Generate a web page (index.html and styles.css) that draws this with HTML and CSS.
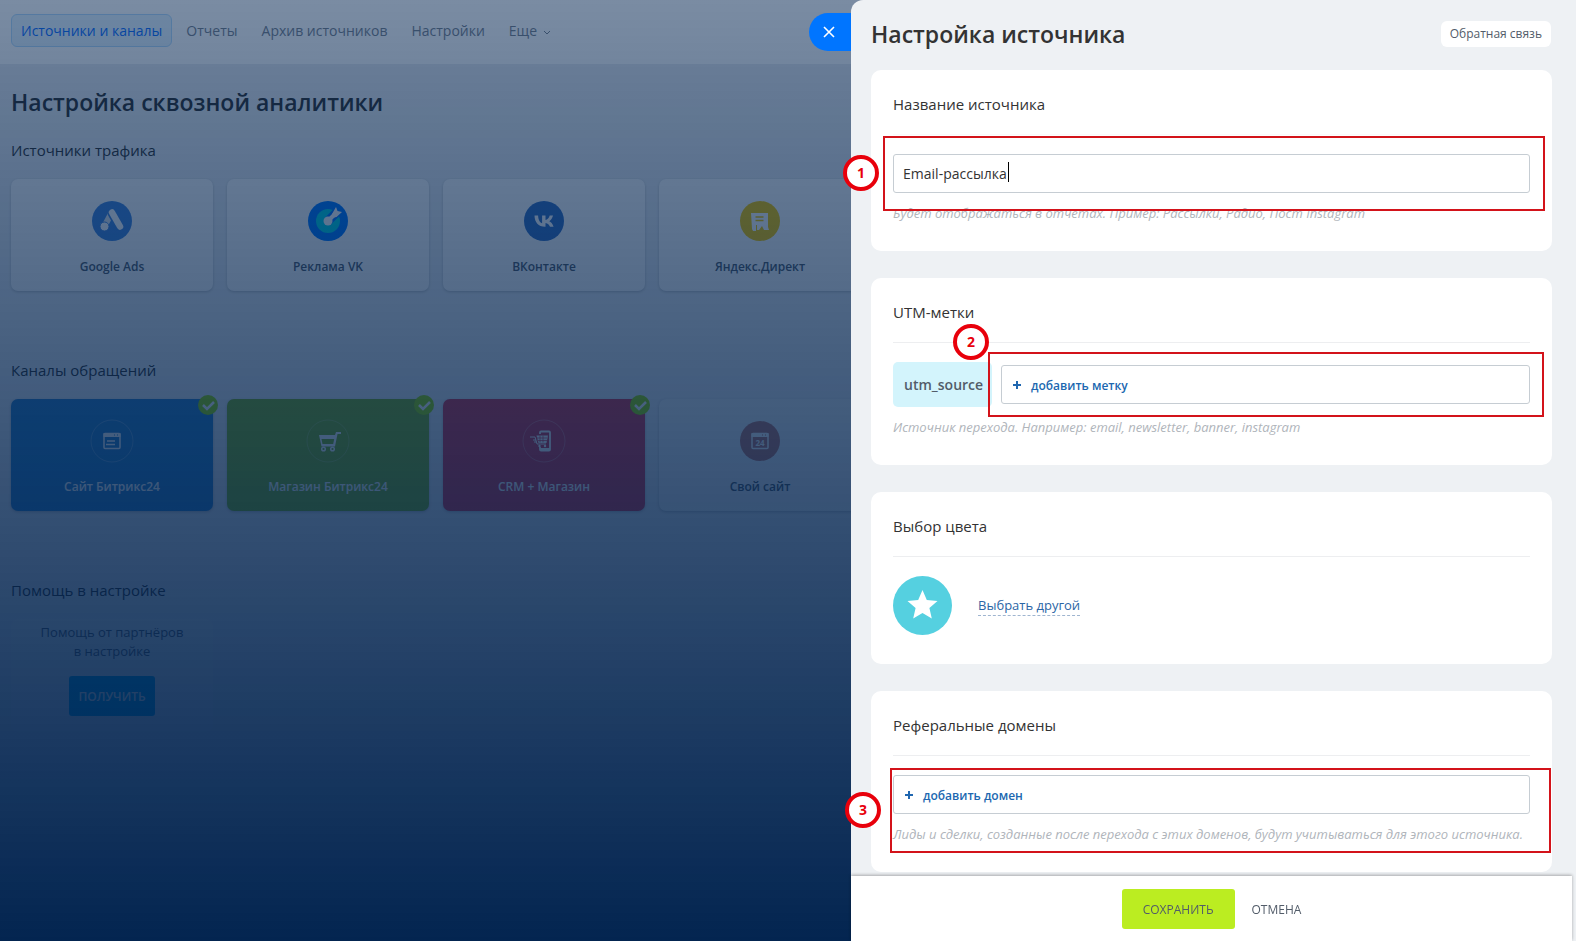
FILE: index.html
```html
<!DOCTYPE html>
<html lang="ru">
<head>
  <meta charset="utf-8">
  <meta name="viewport" content="width=device-width, initial-scale=1">
  <title>Настройка источника</title>
  <link rel="stylesheet" href="styles.css">
</head>
<body>

  <div class="page">
    <nav class="menu">
      <a class="menu-item active" href="#">Источники и каналы</a>
      <a class="menu-item" href="#">Отчеты</a>
      <a class="menu-item" href="#">Архив источников</a>
      <a class="menu-item" href="#">Настройки</a>
      <a class="menu-item" href="#">Еще
        <svg width="8" height="6" viewBox="0 0 8 6"><path d="M1 1l3 3 3-3" fill="none" stroke="currentColor"/></svg>
      </a>
    </nav>

    <main class="content">
      <h1 class="title">Настройка сквозной аналитики</h1>

      <section class="group">
        <h2 class="group-title">Источники трафика</h2>
        <div class="tiles">
          <a class="tile" href="#">
            <svg class="tile-icon" viewBox="0 0 44 44">
              <circle cx="22" cy="22" r="20" fill="#4285dc"/>
              <path d="M21.500 14L14.500 27" stroke="#e3e8ee" stroke-width="6" stroke-linecap="round"/>
              <path d="M22 14l7.500 13.500" stroke="#4285dc" stroke-width="9" stroke-linecap="round"/>
              <path d="M22 13.500l8 14" stroke="#fff" stroke-width="6.500" stroke-linecap="round"/>
              <circle cx="14.500" cy="27.500" r="4.500" fill="#fff" stroke="#4285dc"/>
            </svg>
            <span>Google Ads</span>
          </a>
          <a class="tile" href="#">
            <svg class="tile-icon" viewBox="0 0 44 44">
              <circle cx="22" cy="22" r="20" fill="#0077ff"/>
              <circle cx="22" cy="22" r="12" fill="#00d3e6"/>
              <path d="M22 22l9-9" stroke="#0077ff" stroke-width="9"/>
              <circle cx="22" cy="22" r="4.500" fill="#fff"/>
              <path d="M22 22l8-8" stroke="#fff" stroke-width="4"/>
              <path d="M26 15l4-7 1.500 4 4.500 1-5.500 5-4.500 1z" fill="#fff"/>
            </svg>
            <span>Реклама VK</span>
          </a>
          <a class="tile" href="#">
            <svg class="tile-icon" viewBox="0 0 44 44">
              <circle cx="22" cy="22" r="20" fill="#3570c2"/>
              <path d="M12.500 16.500h3.600c.2 5 2.200 7.300 4 7.700v-7.700h3.400v4.400c2-.2 3.500-2 4.200-4.400h3.300c-.5 2.600-2.300 4.900-3.700 5.700 1.400.6 3.400 2.400 4.300 5.600H28c-.7-2-2.300-3.600-4.500-3.900v3.900C16.500 28 12.700 23.500 12.500 16.500z" fill="#fff"/>
            </svg>
            <span>ВКонтакте</span>
          </a>
          <a class="tile" href="#">
            <svg class="tile-icon" viewBox="0 0 44 44">
              <circle cx="22" cy="22" r="20" fill="#f5c800"/>
              <path d="M13 14h17v14l1 3h-5l-2-4-3 4h-2v-5h-1v6h-3l-1-2z" fill="#fff"/>
              <path d="M17.500 18h8M17.500 21.500h8" stroke="#f5c800" stroke-width="1.500"/>
            </svg>
            <span>Яндекс.Директ</span>
          </a>
        </div>
      </section>

      <section class="group">
        <h2 class="group-title">Каналы обращений</h2>
        <div class="tiles">
          <a class="tile tile-blue" href="#">
            <svg class="tile-icon" viewBox="0 0 44 44">
              <circle cx="22" cy="22" r="21" fill="none" stroke="#fff" stroke-opacity=".25"/>
              <rect x="14" y="14.500" width="16" height="15" rx="1" fill="none" stroke="#fff" stroke-width="1.500"/>
              <path d="M13.500 14h17v4h-17z" fill="#fff"/>
              <path d="M17 22h8M16 25.500h9" stroke="#fff" stroke-width="1.500"/>
              <path d="M24 16h1M27 16h1" stroke="#2a82c8"/>
            </svg>
            <span>Сайт Битрикс24</span>
            <svg class="tile-check" viewBox="0 0 20 20"><circle cx="10" cy="10" r="10" fill="#9bdc00"/><path d="M5 10l4 4 7-7" fill="none" stroke="#fff" stroke-width="2.500"/></svg>
          </a>
          <a class="tile tile-green" href="#">
            <svg class="tile-icon" viewBox="0 0 44 44">
              <circle cx="22" cy="22" r="21" fill="none" stroke="#fff" stroke-opacity=".2"/>
              <path d="M13 16h16l1-3h5v2h-3.500L29 27.500H15.500zM15.500 20l1 5h10.700l1-5z" fill="#fff" fill-rule="evenodd"/>
              <circle cx="17.500" cy="30" r="1.800" fill="none" stroke="#fff" stroke-width="1.500"/>
              <circle cx="26.500" cy="30" r="1.800" fill="none" stroke="#fff" stroke-width="1.500"/>
            </svg>
            <span>Магазин Битрикс24</span>
            <svg class="tile-check" viewBox="0 0 20 20"><circle cx="10" cy="10" r="10" fill="#9bdc00"/><path d="M5 10l4 4 7-7" fill="none" stroke="#fff" stroke-width="2.500"/></svg>
          </a>
          <a class="tile tile-red" href="#">
            <svg class="tile-icon" viewBox="0 0 44 44">
              <circle cx="22" cy="22" r="21" fill="none" stroke="#fff" stroke-opacity=".25"/>
              <path d="M18 15v-1.500q0-1 1-1h8q1 0 1 1v17q0 1-1 1h-8q-1 0-1-1V28" fill="none" stroke="#fff" stroke-width="1.800"/>
              <path d="M18 29h10v3H18z" fill="#fff"/>
              <path d="M8 18h5l2 7h9M11 21h3M12 23h3" fill="none" stroke="#fff"/>
              <path d="M14.500 16.500H26L24.500 24h-8z" fill="#fff"/>
              <path d="M15 19h10M16 21.500h9M18 16.500v7M21 16.500v7" stroke="#d6374e" stroke-width=".7"/>
              <circle cx="17.500" cy="27" r="1.200" fill="#fff"/><circle cx="23" cy="27" r="1.200" fill="#fff"/>
            </svg>
            <span>CRM + Магазин</span>
            <svg class="tile-check" viewBox="0 0 20 20"><circle cx="10" cy="10" r="10" fill="#9bdc00"/><path d="M5 10l4 4 7-7" fill="none" stroke="#fff" stroke-width="2.500"/></svg>
          </a>
          <a class="tile tile-pale" href="#">
            <svg class="tile-icon" viewBox="0 0 44 44">
              <circle cx="22" cy="22" r="20" fill="#c07a70"/>
              <rect x="14" y="14.500" width="16" height="15" rx="1" fill="none" stroke="#fff" stroke-width="1.500"/>
              <path d="M13.500 14h17v4h-17z" fill="#fff"/>
              <path d="M24 16h1M27 16h1" stroke="#c07a70"/>
              <text class="icon-text" x="22" y="27" text-anchor="middle">24</text>
            </svg>
            <span>Свой сайт</span>
          </a>
        </div>
      </section>

      <section class="group">
        <h2 class="group-title">Помощь в настройке</h2>
        <div class="tiles">
          <div class="help">
            <p class="help-text">Помощь от партнёров<br>в настройке</p>
            <button class="help-btn" type="button">ПОЛУЧИТЬ</button>
          </div>
        </div>
      </section>
    </main>
  </div>

  <div class="overlay"></div>

  <form class="panel">
    <button class="close" type="button" aria-label="Закрыть">
      <svg width="12" height="12" viewBox="0 0 12 12"><path d="M1 1l10 10M11 1L1 11" stroke="#fff" stroke-width="1.600"/></svg>
    </button>

    <div class="panel-body">
      <header class="panel-head">
        <h1 class="panel-title">Настройка источника</h1>
        <button class="feedback" type="button">Обратная связь</button>
      </header>

      <section class="card card-name">
        <h2 class="card-title"><label for="name">Название источника</label></h2>
        <div class="field">
          <input class="input" id="name" type="text" value="Email-рассылка">
          <span class="caret"></span>
          <div class="mark mark-name"></div>
          <div class="step step-name">1</div>
        </div>
        <p class="hint">Будет отображаться в отчетах. Пример: Рассылки, Радио, Пост Instagram</p>
      </section>

      <section class="card">
        <h2 class="card-title">UTM-метки</h2>
        <div class="utm">
          <span class="utm-label">utm_source</span>
          <div class="field">
            <button class="input add" type="button">
              <svg width="8" height="8" viewBox="0 0 8 8"><path d="M4 0v8M0 4h8" stroke="currentColor" stroke-width="2"/></svg>
              добавить метку
            </button>
            <div class="mark mark-utm"></div>
            <div class="step step-utm">2</div>
          </div>
        </div>
        <p class="hint">Источник перехода. Например: email, newsletter, banner, instagram</p>
      </section>

      <section class="card">
        <h2 class="card-title">Выбор цвета</h2>
        <div class="color">
          <svg width="59" height="59" viewBox="0 0 59 59">
            <circle cx="29.500" cy="29.500" r="29.500" fill="#55d0e0"/>
            <path d="M29.500 14l4.300 9.900 10.700 1-8.100 7.100 2.400 10.500-9.300-5.500-9.300 5.500L22.600 32l-8.100-7.100 10.700-1z" fill="#fff"/>
          </svg>
          <a class="color-link" href="#">Выбрать другой</a>
        </div>
      </section>

      <section class="card">
        <h2 class="card-title">Реферальные домены</h2>
        <div class="field">
          <button class="input add" type="button">
            <svg width="8" height="8" viewBox="0 0 8 8"><path d="M4 0v8M0 4h8" stroke="currentColor" stroke-width="2"/></svg>
            добавить домен
          </button>
          <p class="hint">Лиды и сделки, созданные после перехода с этих доменов, будут учитываться для этого источника.</p>
          <div class="mark mark-domain"></div>
          <div class="step step-domain">3</div>
        </div>
      </section>
    </div>

    <footer class="panel-foot">
      <button class="save" type="submit">СОХРАНИТЬ</button>
      <button class="cancel" type="button">ОТМЕНА</button>
    </footer>
  </form>

</body>
</html>
```
FILE: styles.css
```css
* {
  box-sizing: border-box;
}

body {
  margin: 0;
  height: 100vh;
  overflow: hidden;
  background: #e8ebef;
  color: #333;
  font-family: "Open Sans", "Noto Sans", sans-serif;
  font-size: 14px;
}

h1, h2, p {
  margin: 0;
}

a {
  color: inherit;
  text-decoration: none;
}

button, input {
  font-family: inherit;
  margin: 0;
}

button {
  cursor: pointer;
}

/* page under the slider */

.menu {
  display: flex;
  align-items: flex-start;
  gap: 4px;
  height: 64px;
  padding: 14px 11px;
  background: #fff;
}

.menu-item {
  padding: 0 9px;
  border: 1px solid transparent;
  border-radius: 6px;
  line-height: 31px;
  color: #7b8490;
}

.menu-item.active {
  color: #1070ff;
  background: #e5f4ff;
  border-color: #b5dcfc;
}

.menu-item svg {
  margin-left: 2px;
}

.content {
  padding: 20px 11px;
}

.title {
  font-size: 23px;
  line-height: 36px;
  font-weight: 600;
}

.group {
  margin-top: 67px;
}

.title + .group {
  margin-top: 18px;
}

.group-title {
  margin-bottom: 17px;
  font-size: 15px;
  line-height: 24px;
  font-weight: 400;
}

.tiles {
  display: flex;
  gap: 14px;
}

.tile {
  position: relative;
  display: flex;
  flex-direction: column;
  align-items: center;
  gap: 14px;
  width: 202px;
  height: 112px;
  padding-top: 20px;
  border-radius: 7px;
  background: #fbfcfd;
  box-shadow: 0 1px 3px rgba(0, 0, 0, 0.2);
  font-size: 12px;
  line-height: 20px;
  font-weight: 600;
  color: #525c69;
}

.tile-icon {
  width: 44px;
  height: 44px;
}

.tile-blue {
  background: #2f82c8;
  color: #fff;
}

.tile-green {
  background: #82b41e;
  color: #fff;
}

.tile-red {
  background: #d6374e;
  color: #fff;
}

.tile-pale {
  background: #f0f3f5;
}

.tile-check {
  position: absolute;
  top: -4px;
  right: -5px;
  width: 20px;
  height: 20px;
}

.icon-text {
  font-size: 8px;
  font-weight: 700;
  fill: #fff;
}

.help {
  display: flex;
  flex-direction: column;
  align-items: center;
  gap: 15px;
  width: 202px;
  padding: 4px 10px 16px;
  border-radius: 7px;
  background: #eceff2;
}

.help-text {
  color: #525c69;
  line-height: 19px;
  font-size: 13px;
  text-align: center;
}

.help-btn {
  height: 40px;
  padding: 0 9px;
  border: 0;
  border-radius: 3px;
  background: #00a2e8;
  color: #fff;
  font-size: 12px;
  font-weight: 600;
}

.overlay {
  position: fixed;
  inset: 0;
  background: linear-gradient(rgba(0, 34, 78, 0.52), rgba(0, 34, 78, 0.99));
}

/* slider */

.panel {
  position: fixed;
  top: 0;
  right: 0;
  bottom: 0;
  width: 46%;
  display: flex;
  flex-direction: column;
  border-radius: 12px 0 0 0;
  background: #eef1f4;
}

.close {
  position: absolute;
  top: 13px;
  left: -42px;
  width: 42px;
  height: 38px;
  padding: 0 2px 0 0;
  border: 0;
  border-radius: 19px 0 0 19px;
  background: #0075ff;
}

.close svg {
  display: block;
  margin: auto;
}

.panel-body {
  flex: 1;
  min-height: 0;
  padding: 0 24px 0 20px;
}

.panel-head {
  display: flex;
  justify-content: space-between;
  align-items: center;
  height: 70px;
  padding: 0 1px 3px 0;
}

.panel-title {
  font-size: 23px;
  line-height: 36px;
  font-weight: 600;
}

.feedback {
  height: 26px;
  padding: 0 9px;
  border: 0;
  border-radius: 6px;
  background: #fff;
  color: #525c69;
  font-size: 12px;
}

.card {
  margin-bottom: 27px;
  padding: 0 22px 29px;
  border-radius: 10px;
  background: #fff;
}

.card-title {
  height: 65px;
  padding-top: 22px;
  margin-bottom: 19px;
  border-bottom: 1px solid #edeef0;
  font-size: 15px;
  line-height: 24px;
  font-weight: 400;
}

.card-name .card-title {
  border-color: #fafafb;
}

.field {
  position: relative;
  flex: 1;
}

.input {
  display: block;
  width: 100%;
  height: 39px;
  padding: 0 9px;
  border: 1px solid #c6cdd3;
  border-radius: 3px;
  background: #fff;
  color: #333;
  font-size: 14px;
  outline: none;
}

.add {
  display: flex;
  align-items: center;
  gap: 10px;
  padding: 1px 11px 0;
  color: #2067b0;
  font-size: 12px;
  font-weight: 600;
}

.caret {
  position: absolute;
  top: 8px;
  left: 115px;
  width: 1px;
  height: 20px;
  background: #000;
}

.hint {
  padding-top: 11px;
  color: #b0b5bb;
  font-size: 13px;
  line-height: 18px;
  font-style: italic;
}

.utm {
  display: flex;
  align-items: center;
  gap: 9px;
}

.utm-label {
  width: 99px;
  padding-left: 11px;
  border-radius: 5px;
  background: #d3f4fc;
  color: #525c69;
  line-height: 45px;
  font-weight: 600;
}

.color {
  display: flex;
  align-items: center;
  gap: 26px;
}

.color-link {
  border-bottom: 1px dashed #9fb5d0;
  color: #2b65a5;
  font-size: 13px;
  line-height: 20px;
}

.panel-foot {
  display: flex;
  flex-shrink: 0;
  justify-content: center;
  align-items: center;
  gap: 17px;
  height: 65px;
  margin-right: 4px;
  background: #fff;
  box-shadow: 0 -1px 3px rgba(0, 0, 0, 0.3);
  z-index: 1;
}

.save, .cancel {
  height: 40px;
  border: 0;
  border-radius: 3px;
  color: #525c69;
  font-size: 12px;
  background: none;
  padding: 1px 0 0;
}

.save {
  padding: 1px 21px 0;
  background: #bbed21;
}

/* numbered callouts */

.mark {
  position: absolute;
  border: 2px solid #d3131a;
  pointer-events: none;
}

.mark-name {
  inset: -18px -15px -18px -10px;
}

.mark-utm {
  inset: -13px -14px -13px -13px;
}

.mark-domain {
  inset: -7px -21px -10px -3px;
}

.step {
  position: absolute;
  width: 36px;
  height: 36px;
  border: 4px solid #e8000b;
  border-radius: 50%;
  background: #fff;
  color: #e8000b;
  font-weight: 700;
  line-height: 28px;
  text-align: center;
}

.step-name {
  top: 1px;
  left: -50px;
}

.step-utm {
  top: -41px;
  left: -48px;
}

.step-domain {
  top: 17px;
  left: -48px;
}
```
